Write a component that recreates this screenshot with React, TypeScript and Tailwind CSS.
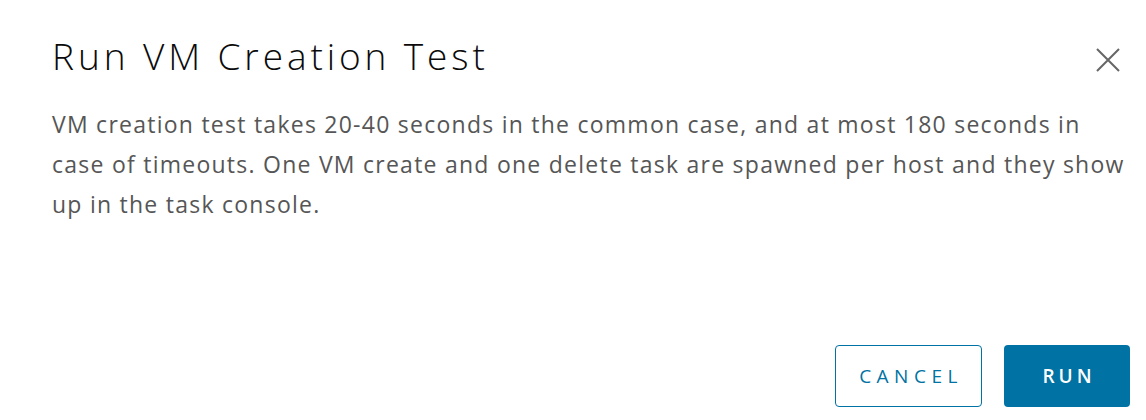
export default function App() {
  return (
    <div
      className="flex h-[420px] w-[1146px] flex-col bg-white pl-[52px] pr-[16px]"
      style={{ fontFamily: '"Open Sans", "Liberation Sans", sans-serif' }}
    >
      <div className="flex items-start justify-between pt-[32px]">
        <h1 className="text-[37px] leading-[48px] font-light tracking-[3.9px] text-[#0a0a0a]">Run VM Creation Test</h1>
        <button className="mr-[8px] mt-[14px] text-[#666666]" aria-label="Close">
          <svg width="28" height="28" viewBox="0 0 28 28" fill="none" stroke="currentColor" strokeWidth="2">
            <path d="M3 3 L25 25 M25 3 L3 25" />
          </svg>
        </button>
      </div>
      <p className="mt-[24px] whitespace-nowrap text-[23px] leading-[40px] tracking-[1.25px] text-[#565656]">
        VM creation test takes 20-40 seconds in the common case, and at most 180 seconds in
        <br />
        case of timeouts. One VM create and one delete task are spawned per host and they show
        <br />
        up in the task console.
      </p>
      <div className="mt-auto mb-[13px] flex justify-end gap-[22px]">
        <button className="h-[62px] w-[147px] rounded-[4px] border border-[#0072a3] bg-white pl-[5px] text-[19px] font-medium tracking-[5.5px] text-[#0072a3]">
          CANCEL
        </button>
        <button className="h-[62px] w-[126px] rounded-[4px] bg-[#0072a3] pl-[4px] text-[19px] font-semibold tracking-[4px] text-white">
          RUN
        </button>
      </div>
    </div>
  );
}
